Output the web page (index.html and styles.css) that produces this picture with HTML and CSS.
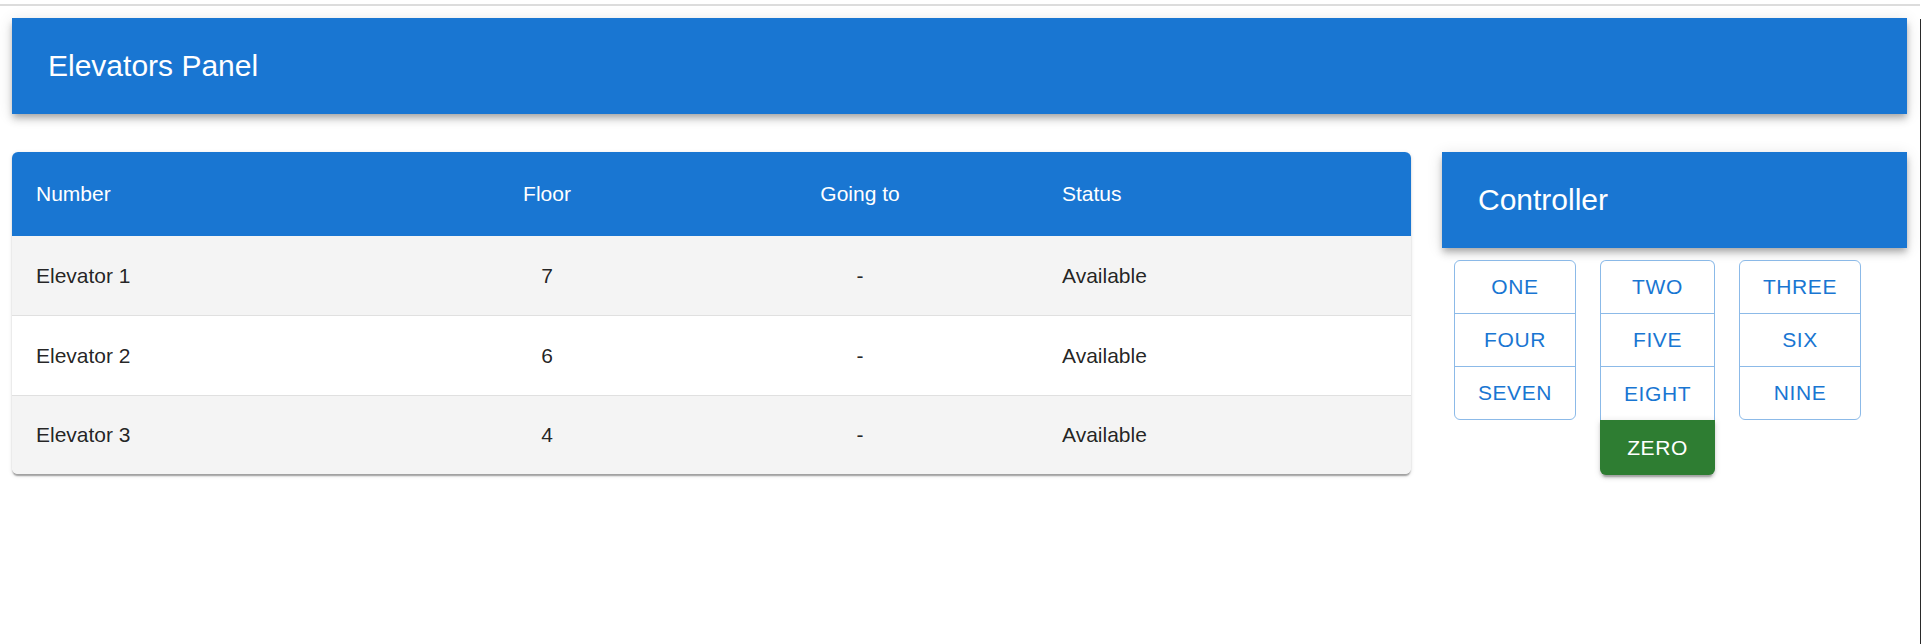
FILE: index.html
```html
<!DOCTYPE html>
<html lang="en">
<head>
<meta charset="utf-8">
<title>Elevators Panel</title>
<link rel="stylesheet" href="styles.css">
</head>
<body>
<div class="frame">
  <div class="page">
    <div class="chrome-line"></div>
    <div class="content">
      <header class="appbar"><h1 class="appbar-title">Elevators Panel</h1></header>
      <div class="layout">
        <div class="table-card">
          <div class="trow thead">
            <div class="cell">Number</div>
            <div class="cell center">Floor</div>
            <div class="cell center">Going to</div>
            <div class="cell">Status</div>
          </div>
          <div class="trow odd">
            <div class="cell">Elevator 1</div>
            <div class="cell center">7</div>
            <div class="cell center">-</div>
            <div class="cell">Available</div>
          </div>
          <div class="trow">
            <div class="cell">Elevator 2</div>
            <div class="cell center">6</div>
            <div class="cell center">-</div>
            <div class="cell">Available</div>
          </div>
          <div class="trow odd last">
            <div class="cell">Elevator 3</div>
            <div class="cell center">4</div>
            <div class="cell center">-</div>
            <div class="cell">Available</div>
          </div>
        </div>
        <div class="controller">
          <div class="ctrl-head">Controller</div>
          <div class="keypad">
            <div class="btn-group wide">
              <button class="btn">One</button>
              <button class="btn">Four</button>
              <button class="btn">Seven</button>
            </div>
            <div class="btn-col">
              <div class="btn-group narrow joined">
                <button class="btn">Two</button>
                <button class="btn">Five</button>
                <button class="btn">Eight</button>
              </div>
              <button class="btn zero">Zero</button>
            </div>
            <div class="btn-group wide">
              <button class="btn">Three</button>
              <button class="btn">Six</button>
              <button class="btn">Nine</button>
            </div>
          </div>
        </div>
      </div>
    </div>
  </div>
  <div class="edge"></div>
</div>
</body>
</html>
```

FILE: styles.css
```css
* { box-sizing: border-box; }

html, body {
  margin: 0;
  padding: 0;
  background: #ffffff;
  font-family: "Liberation Sans", Arial, Helvetica, sans-serif;
  color: rgba(0, 0, 0, 0.87);
}

.frame {
  display: flex;
  min-height: 644px;
}

.page {
  flex: 1;
  padding-top: 4px;
}

.edge {
  width: 1px;
  margin-top: 19px;
  background: #2a2a2a;
}

.chrome-line {
  height: 2px;
  background: #dcdcdc;
}

.content {
  padding: 12px 13px 0 12px;
}

.appbar {
  height: 96px;
  background: #1976d2;
  display: flex;
  align-items: center;
  padding: 0 36px;
  box-shadow: 0 3px 6px -1.5px rgba(0,0,0,0.2), 0 6px 7.5px 0 rgba(0,0,0,0.14), 0 1.5px 15px 0 rgba(0,0,0,0.12);
}

.appbar-title {
  margin: 0;
  font-size: 30px;
  font-weight: 400;
  color: #ffffff;
  line-height: 1.6;
}

.layout {
  margin-top: 38px;
  display: grid;
  grid-template-columns: 1399fr 465fr;
  column-gap: 31px;
  align-items: start;
}

.table-card {
  border-radius: 6px;
  overflow: hidden;
  background: #ffffff;
  box-shadow: 0 3px 1.5px -1.5px rgba(0,0,0,0.2), 0 1.5px 1.5px 0 rgba(0,0,0,0.14), 0 1.5px 4.5px 0 rgba(0,0,0,0.12);
}

.trow {
  display: grid;
  grid-template-columns: 400px 270px 356px 1fr;
  height: 80px;
  align-items: center;
  border-bottom: 1px solid #e0e0e0;
  font-size: 21px;
}

.trow.thead {
  height: 84px;
  background: #1976d2;
  color: #ffffff;
  border-bottom: none;
}

.trow.odd { background: #f4f4f4; }
.trow.last { border-bottom: none; height: 78px; }

.cell {
  padding: 0 24px;
  line-height: 30px;
}

.cell.center { text-align: center; }

.controller {
  display: flex;
  flex-direction: column;
}

.ctrl-head {
  height: 96px;
  background: #1976d2;
  color: #ffffff;
  font-size: 30px;
  display: flex;
  align-items: center;
  padding: 0 36px;
  box-shadow: 0 3px 6px -1.5px rgba(0,0,0,0.2), 0 6px 7.5px 0 rgba(0,0,0,0.14), 0 1.5px 15px 0 rgba(0,0,0,0.12);
}

.keypad {
  margin-top: 12px;
  padding-left: 12px;
  display: flex;
  gap: 24px;
  align-items: flex-start;
}

.btn-group {
  display: flex;
  flex-direction: column;
  border: 1px solid rgba(25, 118, 210, 0.5);
  border-radius: 6px;
  overflow: hidden;
}

.btn-group.wide { width: 122px; }
.btn-group.narrow { width: 115px; }

.btn-group.joined {
  border-bottom-left-radius: 0;
  border-bottom-right-radius: 0;
  border-bottom: none;
}

.btn-col {
  display: flex;
  flex-direction: column;
  width: 115px;
}

.btn {
  height: 53px;
  border: none;
  border-bottom: 1px solid rgba(25, 118, 210, 0.5);
  background: transparent;
  color: #1976d2;
  font-family: "Liberation Sans", Arial, Helvetica, sans-serif;
  font-size: 21px;
  font-weight: 500;
  letter-spacing: 0.6px;
  text-transform: uppercase;
  padding: 0;
  margin: 0;
  cursor: pointer;
}

.btn-group .btn:last-child { border-bottom: none; height: 52px; }
.btn-group.joined .btn:last-child { height: 53px; }

.btn.zero {
  height: 55px;
  background: #2e7d32;
  color: #ffffff;
  border: none;
  border-radius: 0 0 6px 6px;
  box-shadow: 0 4.5px 1.5px -3px rgba(0,0,0,0.2), 0 3px 3px 0 rgba(0,0,0,0.14), 0 1.5px 7.5px 0 rgba(0,0,0,0.12);
}
```
